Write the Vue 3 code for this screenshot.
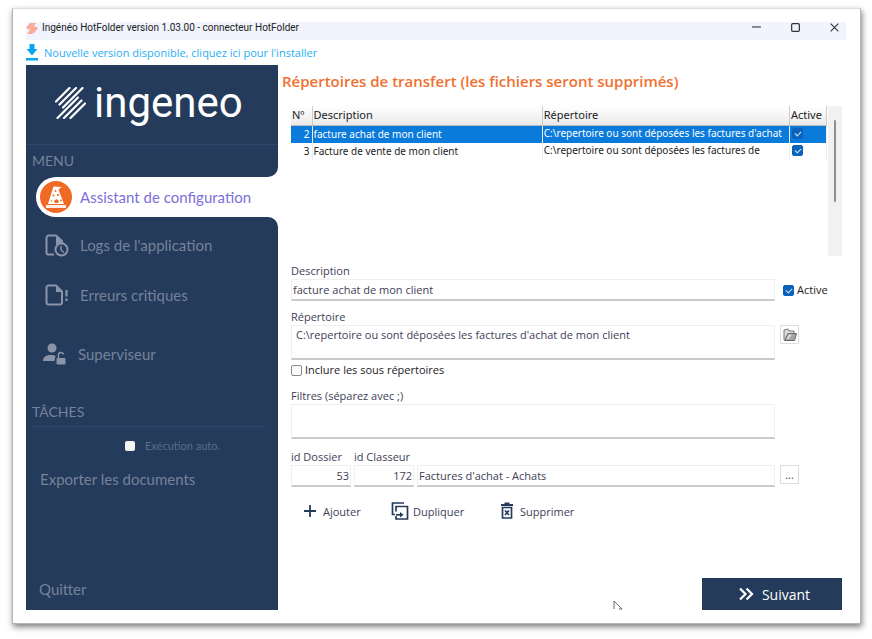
<script setup>
import { ref } from 'vue'

const rows = ref([
  { id: 2, name: 'facture achat de mon client', path: "C:\\repertoire ou sont déposées les factures d'achat de mon client", active: true },
  { id: 3, name: 'Facture de vente de mon client', path: 'C:\\repertoire ou sont déposées les factures de vente de mon client', active: true },
])
const selectedId = ref(2)
const description = ref('facture achat de mon client')
const directory = ref("C:\\repertoire ou sont déposées les factures d'achat de mon client")
const filters = ref('')
const folderId = ref('53')
const binderId = ref('172')
const binderName = ref("Factures d'achat - Achats")
const active = ref(true)
const recursive = ref(false)
const autoRun = ref(false)
</script>

<template>
  <div class="window">
    <header class="titlebar">
      <svg class="app-icon" viewBox="0 0 12 12" aria-hidden="true">
        <path d="M4 1h6L8 4l4 2-3 4-3 2H1l3-4-4-2z" fill="#f9a592" />
        <path d="M1 5l4-4M2 7l6-6M4 7l4-4M3 11l6-6M6 11l4-4" stroke="#fbc6ba" stroke-width="0.6" />
      </svg>
      <h1 class="window-title">Ingénéo HotFolder version 1.03.00 - connecteur HotFolder</h1>
      <div class="controls">
        <button type="button" aria-label="Réduire">
          <svg viewBox="0 0 10 10"><path d="M1 4.5h8" stroke="#333" stroke-width="1" /></svg>
        </button>
        <button type="button" aria-label="Agrandir">
          <svg viewBox="0 0 10 10"><rect x="1.500" y="1.500" width="7" height="7" rx="1" fill="none" stroke="#333" stroke-width="1.100" /></svg>
        </button>
        <button type="button" aria-label="Fermer">
          <svg viewBox="0 0 10 10"><path d="M1.500 1.500l7 7M8.500 1.500l-7 7" stroke="#333" stroke-width="1" /></svg>
        </button>
      </div>
    </header>

    <a class="update" href="#">
      <svg viewBox="0 0 12 18" aria-hidden="true">
        <path d="M3.500 0h5v5H11.500L6 11.500 .5 5h3zM0 14h12v2.500H0z" fill="#0aa5f0" />
      </svg>
      <span>Nouvelle version disponible, cliquez ici pour l'installer</span>
    </a>

    <div class="body">
      <aside class="sidebar">
        <div class="brand-area">
          <div class="brand">
            <svg viewBox="0 0 31 32" aria-hidden="true">
              <g stroke="#fff" stroke-width="2.200" stroke-linecap="round">
                <path d="M1 14.500L14.500 1M4.500 17.500L21 1M8 20.500L27.500 1" />
                <path d="M2.500 31L23 10.500M9 31L26.500 13.500M15.500 31L30 16.500" />
              </g>
            </svg>
            <span>ingeneo</span>
          </div>
          <h2 class="section">MENU</h2>
        </div>

        <div class="active-row">
          <a class="active-item" href="#">
            <svg viewBox="0 0 32 32" aria-hidden="true">
              <circle cx="16" cy="16" r="16" fill="#f06a25" />
              <path d="M13.500 5.500l8 .5-3 2.500L24 23H8z" fill="#fff" />
              <path d="M6 24h20v3H6z" fill="#fff" opacity="0.9" />
              <circle cx="15.500" cy="10" r="1" fill="#f06a25" />
              <circle cx="13.500" cy="14.500" r="1.100" fill="#f06a25" />
              <circle cx="18" cy="14" r="1.100" fill="#f06a25" />
              <path d="M14 20l2.500-2 2.500 2-1 2h-3z" fill="#f06a25" />
              <circle cx="11.500" cy="20" r="0.800" fill="#f06a25" />
              <circle cx="21" cy="19.500" r="0.900" fill="#f06a25" />
            </svg>
            <span>Assistant de configuration</span>
          </a>
        </div>

        <div class="menu-rest">
          <nav>
            <a class="item" href="#">
              <svg viewBox="0 0 24 24" aria-hidden="true">
                <path d="M9 21.500H3.500a2 2 0 0 1-2-2v-15a2 2 0 0 1 2-2H11l6.500 6" fill="none" stroke="#8b94a8" stroke-width="2" />
                <path d="M11 2l8 8h-4.500L11 12z" fill="#8b94a8" />
                <circle cx="16.500" cy="16.500" r="6" fill="#243b5b" stroke="#8b94a8" stroke-width="2" />
                <path d="M16 13v4l3 2.500" fill="none" stroke="#8b94a8" stroke-width="1.500" />
              </svg>
              <span>Logs de l'application</span>
            </a>
            <a class="item" href="#">
              <svg viewBox="0 0 24 24" aria-hidden="true">
                <path d="M3.500 2.500H11l6 6v11a2 2 0 0 1-2 2H3.500a2 2 0 0 1-2-2v-15a2 2 0 0 1 2-2z" fill="none" stroke="#8b94a8" stroke-width="2" />
                <path d="M11 3v6h6z" fill="#8b94a8" />
                <path d="M21.500 7v6.500M21.500 15.500v2.500" stroke="#8b94a8" stroke-width="2.200" />
              </svg>
              <span>Erreurs critiques</span>
            </a>
            <a class="item supervisor" href="#">
              <svg viewBox="0 0 24 24" aria-hidden="true">
                <circle cx="9" cy="6" r="4.500" fill="#8b94a8" />
                <path d="M0 19c0-4.500 4-6 8-6 2 0 3.500 0 4.500 1l-1 5z" fill="#8b94a8" />
                <rect x="13.500" y="16" width="9" height="6.500" rx="1" fill="#8b94a8" />
                <path d="M15.500 16v-2.500a2.500 2.500 0 0 1 5-1" fill="none" stroke="#8b94a8" stroke-width="1.500" />
              </svg>
              <span>Superviseur</span>
            </a>
          </nav>

          <h2 class="section tasks">TÂCHES</h2>
          <label class="auto"><input v-model="autoRun" type="checkbox" /><span>Exécution auto.</span></label>
          <button type="button" class="text-button">Exporter les documents</button>
          <button type="button" class="text-button quit">Quitter</button>
        </div>
      </aside>

      <main>
        <h2 class="page-title">Répertoires de transfert (les fichiers seront supprimés)</h2>

        <div class="grid-area">
          <table>
            <colgroup><col class="c-id" /><col class="c-name" /><col /><col class="c-active" /></colgroup>
            <thead>
              <tr><th>Nº</th><th>Description</th><th>Répertoire</th><th>Active</th></tr>
            </thead>
            <tbody>
              <tr v-for="row in rows" :key="row.id" :class="{ selected: row.id === selectedId }" @click="selectedId = row.id">
                <td class="num">{{ row.id }}</td>
                <td>{{ row.name }}</td>
                <td><div class="path">{{ row.path }}</div></td>
                <td><input v-model="row.active" class="check" type="checkbox" :aria-label="'Active ' + row.name" /></td>
              </tr>
            </tbody>
          </table>
          <div class="track"><div class="thumb"></div></div>
        </div>

        <form @submit.prevent>
          <label for="description">Description</label>
          <div class="line">
            <input id="description" v-model="description" class="field" type="text" />
            <div class="side"><label class="tick"><input v-model="active" class="check" type="checkbox" />Active</label></div>
          </div>

          <label class="spaced" for="directory">Répertoire</label>
          <div class="line">
            <textarea id="directory" v-model="directory" class="field indented"></textarea>
            <div class="side">
              <button type="button" class="mini" aria-label="Parcourir">
                <svg viewBox="0 0 14 14" aria-hidden="true">
                  <path d="M1 12V2l4-1 1 2h5v3" fill="#ddd" stroke="#777" />
                  <path d="M1.500 12.500L5 5.500h8.500l-2 7z" fill="#a5a5a5" stroke="#666" />
                  <path d="M3.500 11L6 6.500h3L5.500 11z" fill="#ddd" />
                </svg>
              </button>
            </div>
          </div>

          <label class="tick recursive"><input v-model="recursive" class="check" type="checkbox" />Inclure les sous répertoires</label>

          <label class="spaced" for="filters">Filtres (séparez avec ;)</label>
          <div class="line">
            <textarea id="filters" v-model="filters" class="field"></textarea>
            <div class="side"></div>
          </div>

          <div class="ids">
            <div class="id-field">
              <label for="folder">id Dossier</label>
              <input id="folder" v-model="folderId" class="field right" type="text" />
            </div>
            <div class="id-field">
              <label for="binder">id Classeur</label>
              <input id="binder" v-model="binderId" class="field right" type="text" />
            </div>
            <input v-model="binderName" class="field" type="text" aria-label="Nom du classeur" />
            <div class="side"><button type="button" class="mini" aria-label="Choisir un classeur">...</button></div>
          </div>

          <div class="actions">
            <button type="button">
              <svg viewBox="0 0 18 18" aria-hidden="true"><path d="M9 3v12M3 9h12" stroke="#243b5b" stroke-width="1.800" /></svg>
              Ajouter
            </button>
            <button type="button">
              <svg viewBox="0 0 18 18" aria-hidden="true">
                <g fill="none" stroke="#243b5b" stroke-width="1.700">
                  <path d="M13 1H1.500v11.500H4" />
                  <path d="M5 9.500V4.500h11.500v12.500H5v-3" />
                  <path d="M5 12.800h5" />
                </g>
                <path d="M9 10l3.500 2.800L9 15.500z" fill="#243b5b" />
              </svg>
              Dupliquer
            </button>
            <button type="button">
              <svg viewBox="0 0 18 18" aria-hidden="true">
                <path d="M3 3h12M6.500 1.500h5" stroke="#243b5b" stroke-width="1.800" />
                <path d="M4.500 5.500h9v10.500h-9zM7 8.500l4 4.500M11 8.500L7 13" fill="none" stroke="#243b5b" stroke-width="1.700" />
              </svg>
              Supprimer
            </button>
          </div>
        </form>

        <footer>
          <button type="button" class="next">
            <svg viewBox="0 0 16 14" aria-hidden="true"><path d="M2 1.500L7.500 7 2 12.500M8.500 1.500L14 7l-5.500 5.500" fill="none" stroke="#fff" stroke-width="2.200" /></svg>
            Suivant
          </button>
          <svg class="pointer" viewBox="0 0 10 10" aria-hidden="true"><path d="M1 9V1l8 8H6" fill="#fff" stroke="#555" stroke-width="0.900" /></svg>
        </footer>
      </main>
    </div>
  </div>
</template>

<style>
body {
  background: #fff;
}
#app {
  display: flex;
  min-height: 100vh;
}
</style>

<style scoped>
* {
  box-sizing: border-box;
}
button,
input,
textarea {
  font: inherit;
  color: inherit;
  margin: 0;
  padding: 0;
  border: 0;
  background: none;
}
h1,
h2 {
  margin: 0;
  font-weight: 400;
}
a {
  color: inherit;
  text-decoration: none;
}
svg {
  flex: none;
}
.window {
  flex: 1;
  display: flex;
  flex-direction: column;
  min-width: 0;
  margin: 8px 11px 15px 12px;
  padding: 13px 14px 13px 13px;
  border: 1px solid #b4b4b4;
  border-top-color: #ddd;
  background: #fff;
  box-shadow: 1px 3px 6px rgba(0, 0, 0, 0.5);
  font-family: "Open Sans", "Noto Sans", sans-serif;
  font-size: 11px;
  color: #3e3e56;
}
.titlebar {
  display: flex;
  align-items: flex-start;
  height: 18px;
  background: #f1f4fc;
}
.app-icon {
  width: 12px;
  height: 12px;
}
.window-title {
  flex: 1;
  margin-left: 4px;
  font-family: Roboto, sans-serif;
  font-size: 10px;
  line-height: 12px;
  color: #222;
}
.controls {
  display: flex;
  gap: 28px;
  margin-right: 6px;
}
.controls button {
  width: 11px;
  height: 11px;
}
.controls svg {
  display: block;
  width: 11px;
  height: 11px;
}
.update {
  display: flex;
  align-items: center;
  gap: 6px;
  height: 25px;
  color: #27aff2;
}
.update svg {
  width: 12px;
  height: 18px;
}
.body {
  flex: 1;
  display: flex;
  padding-right: 4px;
}
.sidebar {
  display: flex;
  flex-direction: column;
  width: 252px;
  font-family: Lato, sans-serif;
  font-size: 15px;
  color: #76829a;
}
.brand-area {
  height: 112px;
  border-bottom-right-radius: 10px;
  background: #243b5b;
}
.brand {
  display: flex;
  align-items: center;
  gap: 8px;
  height: 80px;
  padding: 0 0 4px 29px;
  border-bottom: 1px solid #2a4870;
  font-family: Roboto, sans-serif;
  font-size: 42px;
  color: #fff;
}
.brand svg {
  width: 31px;
  height: 32px;
}
.section {
  padding: 6px 0 0 6px;
  font-size: 14px;
  line-height: 20px;
}
.active-row {
  padding-left: 10px;
  background: linear-gradient(to right, #243b5b 50%, #fff 50%);
}
.active-item {
  display: flex;
  align-items: center;
  gap: 8px;
  height: 40px;
  padding-left: 4px;
  border-radius: 20px 0 0 20px;
  background: #fff;
  color: #7a6fd8;
}
.active-item svg {
  width: 32px;
  height: 32px;
}
.menu-rest {
  flex: 1;
  display: flex;
  flex-direction: column;
  padding-top: 13px;
  border-top-right-radius: 10px;
  background: #243b5b;
}
nav {
  display: flex;
  flex-direction: column;
  gap: 20px;
}
.item {
  display: flex;
  align-items: center;
  gap: 11px;
  height: 30px;
  padding-left: 19px;
}
.item svg {
  width: 24px;
  height: 24px;
}
.supervisor {
  margin-top: 9px;
  padding-left: 17px;
}
.tasks {
  margin: 29px 14px 0 6px;
  padding: 4px 0;
  border-bottom: 1px solid #2a4870;
}
.auto {
  display: flex;
  align-items: center;
  gap: 10px;
  height: 20px;
  margin: 9px 0 13px;
  padding-left: 99px;
  font-size: 11px;
  color: #5f6d87;
}
.auto input {
  appearance: none;
  width: 10px;
  height: 10px;
  border-radius: 2px;
  background: #f5f5f5;
}
.text-button {
  align-self: flex-start;
  margin-left: 14px;
  line-height: 20px;
}
.quit {
  margin: auto 0 11px 13px;
}
main {
  flex: 1;
  display: flex;
  flex-direction: column;
  min-width: 0;
}
.page-title {
  padding-left: 4px;
  font-size: 15px;
  font-weight: 600;
  line-height: 32px;
  color: #f0702f;
}
.grid-area {
  display: flex;
  gap: 1px;
  height: 150px;
  margin: 9px 0 7px 13px;
}
table {
  flex: 1;
  align-self: flex-start;
  width: 100%;
  table-layout: fixed;
  border-collapse: collapse;
  font-family: "Noto Sans", sans-serif;
  font-size: 10px;
  color: #222;
}
.c-id {
  width: 21px;
}
.c-name {
  width: 43%;
}
.c-active {
  width: 37px;
}
th {
  height: 19px;
  padding: 0 0 0 1px;
  border-right: 1px solid #ccc;
  border-bottom: 1px solid #bbb;
  background: linear-gradient(#fff, #eaeaea);
  font-size: 11px;
  font-weight: 400;
  line-height: 18px;
  text-align: left;
  white-space: nowrap;
}
td {
  height: 17px;
  padding: 0 0 0 1px;
  border-right: 1px solid #eee;
  line-height: 16px;
  vertical-align: top;
}
.num {
  padding-right: 2px;
  text-align: right;
}
.path {
  height: 17px;
  padding-right: 4px;
  line-height: 14px;
  overflow: hidden;
}
.selected {
  background: #0a7adb;
  color: #fff;
}
.check {
  appearance: none;
  flex: none;
  display: block;
  width: 11px;
  height: 11px;
  border: 1px solid #888;
  border-radius: 2px;
  background: #fafafa;
}
.check:checked {
  border-color: #0b62bb;
  background: #0b62bb;
}
.check:checked::after {
  content: "";
  display: block;
  width: 3px;
  height: 5px;
  margin: 1px 0 0 3px;
  border: solid #cfe3f8;
  border-width: 0 1px 1px 0;
  transform: rotate(45deg);
}
td .check {
  margin: 2px 0 0 1px;
}
.track {
  width: 14px;
  padding: 14px 6px;
  background: #f1f1f1;
}
.thumb {
  width: 2px;
  height: 82px;
  border-radius: 1px;
  background: #8f8f8f;
}
form {
  display: flex;
  flex-direction: column;
  padding-left: 13px;
}
label {
  line-height: 16px;
}
.spaced {
  margin-top: 8px;
}
.line,
.ids {
  display: flex;
  gap: 3px;
}
.line {
  gap: 5px;
}
.field {
  flex: 1;
  min-width: 0;
  height: 22px;
  padding: 0 1px;
  border: 1px solid #efefef;
  border-bottom: 2px solid #cacaca;
}
textarea.field {
  display: block;
  height: 35px;
  padding-top: 2px;
  line-height: 14px;
  resize: none;
}
textarea.indented {
  padding-left: 4px;
}
.right {
  text-align: right;
}
.side {
  display: flex;
  width: 62px;
  align-items: flex-start;
}
.tick {
  display: flex;
  align-items: center;
  gap: 3px;
  color: #222;
}
.line .tick {
  height: 22px;
  padding-left: 3px;
}
.recursive {
  height: 20px;
}
.mini {
  display: flex;
  align-items: center;
  justify-content: center;
  width: 19px;
  height: 19px;
  border: 1px solid #ddd;
}
.mini svg {
  width: 14px;
  height: 14px;
}
.ids {
  align-items: flex-end;
  margin-top: 10px;
}
.id-field {
  display: flex;
  flex-direction: column;
  width: 60px;
}
.id-field .field {
  flex: none;
}
.ids .side {
  width: 64px;
  height: 22px;
  padding-left: 2px;
}
.actions {
  display: grid;
  grid-template-columns: 90px 107px auto;
  margin-top: 11px;
  padding-left: 10px;
}
.actions button {
  display: flex;
  align-items: center;
  gap: 4px;
  height: 26px;
}
.actions svg {
  width: 18px;
  height: 18px;
}
footer {
  position: relative;
  display: flex;
  justify-content: flex-end;
  margin-top: auto;
}
.next {
  display: flex;
  align-items: center;
  justify-content: center;
  gap: 8px;
  width: 140px;
  height: 32px;
  padding-left: 4px;
  background: #243b5b;
  font-size: 14px;
  color: #fff;
}
.next svg {
  width: 16px;
  height: 14px;
}
.pointer {
  position: absolute;
  right: 219px;
  bottom: 0;
  width: 10px;
  height: 10px;
}
</style>
